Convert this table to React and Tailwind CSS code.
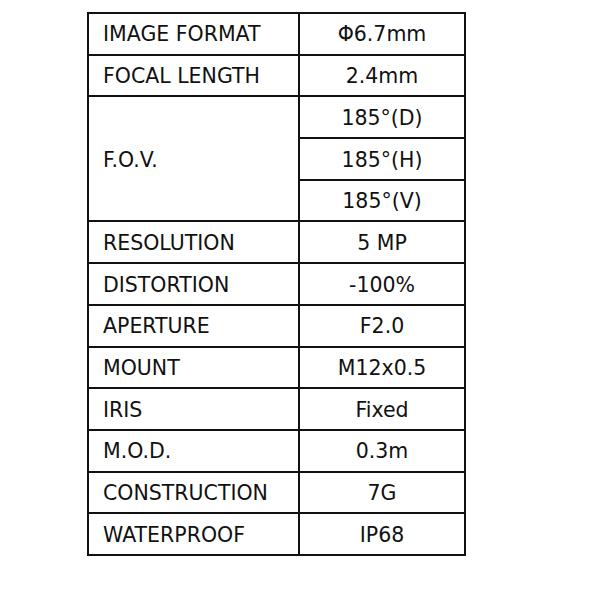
import React from "react";

const ROWS = [
  ["IMAGE FORMAT", "Φ6.7mm"],
  ["FOCAL LENGTH", "2.4mm"],
  ["F.O.V.", ["185°(D)", "185°(H)", "185°(V)"]],
  ["RESOLUTION", "5 MP"],
  ["DISTORTION", "-100%"],
  ["APERTURE", "F2.0"],
  ["MOUNT", "M12x0.5"],
  ["IRIS", "Fixed"],
  ["M.O.D.", "0.3m"],
  ["CONSTRUCTION", "7G"],
  ["WATERPROOF", "IP68"],
];

const cell = "border-2 border-[#111] h-[41.7px] p-0 pt-[2px]";

export default function App() {
  return (
    <div className="w-[600px] h-[600px] bg-white pt-3 pl-[87px]">
      <table
        className="border-collapse border-2 border-[#111] text-[#111] text-[20.5px] w-[379px] table-fixed"
        style={{ fontFamily: '"DejaVu Sans", Verdana, sans-serif' }}
      >
        <tbody>
          {ROWS.map(([label, value]) =>
            Array.isArray(value) ? (
              value.map((v, i) => (
                <tr key={v}>
                  {i === 0 && (
                    <td rowSpan={value.length} className={`${cell} w-[211px] pl-[14px] align-middle`}>
                      {label}
                    </td>
                  )}
                  <td className={`${cell} text-center`}>{v}</td>
                </tr>
              ))
            ) : (
              <tr key={label}>
                <td className={`${cell} w-[211px] pl-[14px]`}>{label}</td>
                <td className={`${cell} text-center`}>{value}</td>
              </tr>
            )
          )}
        </tbody>
      </table>
    </div>
  );
}
